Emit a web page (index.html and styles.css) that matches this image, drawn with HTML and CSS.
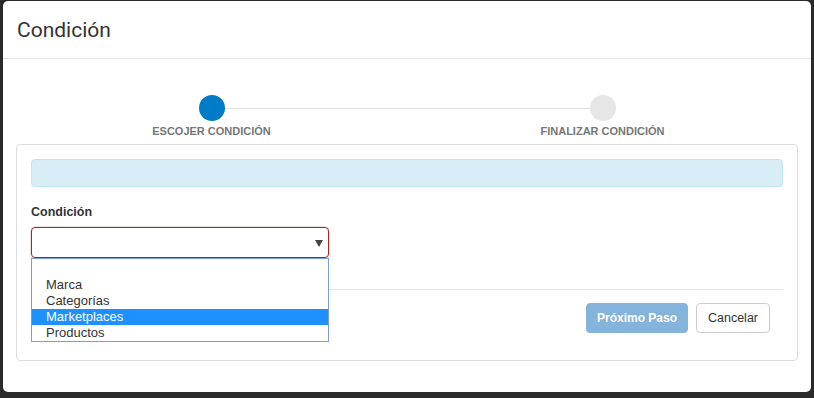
FILE: index.html
```html
<!DOCTYPE html>
<html lang="es">
<head>
<meta charset="utf-8">
<title>Condición</title>
<link rel="stylesheet" href="styles.css">
</head>
<body>
<div class="modal">
  <div class="modal-header">
    <h4 class="modal-title">Condición</h4>
  </div>
  <div class="modal-body">
    <div class="steps">
      <div class="step step-active">
        <span class="step-dot"></span>
        <span class="step-label">ESCOJER CONDICIÓN</span>
      </div>
      <div class="step">
        <span class="step-dot"></span>
        <span class="step-label">FINALIZAR CONDICIÓN</span>
      </div>
    </div>
    <div class="panel">
      <div class="alert-info"></div>
      <label class="field-label">Condición</label>
      <div class="select-wrap">
        <div class="select">
          <svg class="caret" width="8" height="7" viewBox="0 0 8 7"><path d="M0 0 H8 L4 7 Z" fill="#444"/></svg>
        </div>
        <ul class="dropdown">
          <li class="opt opt-empty">&nbsp;</li>
          <li class="opt">Marca</li>
          <li class="opt">Categorías</li>
          <li class="opt opt-selected">Marketplaces</li>
          <li class="opt">Productos</li>
        </ul>
      </div>
      <div class="panel-footer">
        <button class="btn btn-primary" disabled>Próximo Paso</button>
        <button class="btn btn-default">Cancelar</button>
      </div>
    </div>
  </div>
</div>
</body>
</html>
```
FILE: styles.css
```css
html, body {
  margin: 0;
  padding: 0;
  background: #2a2a2a;
}
body {
  padding: 1px 3px 0 3px;
  font-family: "Liberation Sans", Arial, sans-serif;
  color: #333;
}
.modal {
  background: #fff;
  border-radius: 5px;
  height: 391px;
  box-sizing: border-box;
}
.modal-header {
  height: 57px;
  border-bottom: 1px solid #e5e5e5;
  display: flex;
  align-items: center;
  padding: 0 14px;
}
.modal-title {
  margin: 0;
  font-family: Roboto, "Liberation Sans", Arial, sans-serif;
  font-size: 21px;
  font-weight: 400;
  color: #333;
  line-height: 24px;
}
.modal-body {
  padding: 0 13px;
}
.steps {
  display: grid;
  grid-template-columns: 1fr 1fr;
  padding-top: 36px;
  height: 49px;
}
.step {
  display: flex;
  flex-direction: column;
  align-items: center;
  position: relative;
}
.step-active::after {
  content: "";
  position: absolute;
  left: 50%;
  width: 100%;
  top: 13px;
  height: 1px;
  background: #e3e3e3;
  z-index: 0;
}
.step-dot {
  width: 26px;
  height: 26px;
  border-radius: 50%;
  background: #e6e6e6;
  position: relative;
  z-index: 1;
}
.step-active .step-dot {
  background: #007bc7;
}
.step-label {
  margin-top: 3px;
  font-size: 11px;
  font-weight: 700;
  color: #777;
  line-height: 14px;
}
.panel {
  border: 1px solid #ddd;
  border-radius: 4px;
  padding: 14px 14px 0 14px;
  height: 217px;
  box-sizing: border-box;
}
.alert-info {
  height: 28px;
  box-sizing: border-box;
  background: #d9edf7;
  border: 1px solid #bce8f1;
  border-radius: 4px;
}
.field-label {
  display: block;
  margin-top: 16px;
  font-size: 12.5px;
  font-weight: 700;
  line-height: 18px;
  color: #333;
}
.select-wrap {
  position: relative;
  width: 298px;
  margin-top: 6px;
}
.select {
  height: 31px;
  box-sizing: border-box;
  border: 1px solid #9a2a2a;
  border-radius: 4px;
  box-shadow: 0 0 2px rgba(169, 68, 66, 0.55);
  display: flex;
  align-items: center;
  justify-content: flex-end;
  padding-right: 5px;
}
.caret {
  display: block;
  margin-top: 2px;
}
.dropdown {
  position: absolute;
  left: 0;
  top: 31px;
  width: 298px;
  box-sizing: border-box;
  margin: 0;
  padding: 2px 0 0 0;
  list-style: none;
  background: #fff;
  border: 1px solid #7b9ed8;
  z-index: 5;
  font-size: 13px;
  color: #333;
}
.opt {
  height: 16px;
  line-height: 16px;
  padding-left: 14px;
}
.opt-selected {
  background: #1e90ff;
  color: #fff;
}
.panel-footer {
  margin-top: 31px;
  border-top: 1px solid #e5e5e5;
  padding-top: 13px;
  display: flex;
  justify-content: flex-end;
  gap: 8px;
  padding-right: 13px;
}
.btn {
  height: 30px;
  box-sizing: border-box;
  border-radius: 4px;
  font-family: "Liberation Sans", Arial, sans-serif;
  font-size: 12.5px;
  padding: 0;
  margin: 0;
  white-space: nowrap;
  text-align: center;
}
.btn-primary {
  background: #84b3dc;
  border: 1px solid #84b3dc;
  color: #fff;
  font-weight: 700;
  font-size: 12px;
  width: 102px;
}
.btn-default {
  background: #fff;
  border: 1px solid #ccc;
  color: #333;
  width: 74px;
}
```
